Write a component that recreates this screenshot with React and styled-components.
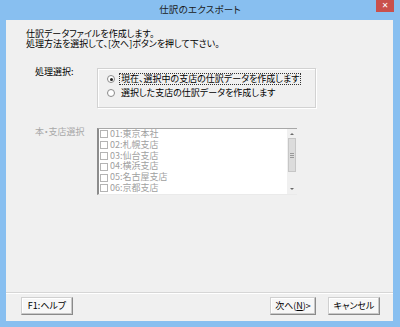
import React from "react";
import styled, { createGlobalStyle } from "styled-components";

const GlobalStyle = createGlobalStyle`
  html, body { margin: 0; padding: 0; background: #88bff0; }
  body { font-family: "Noto Sans CJK JP", "Noto Sans", sans-serif; }
`;

const Window = styled.div`
  width: 400px;
  height: 327px;
  background: #88bff0;
  display: flex;
  flex-direction: column;
  box-sizing: border-box;
  font-feature-settings: "palt";
`;

const TitleBar = styled.div`
  height: 20px;
  display: grid;
  grid-template-columns: 1fr auto 1fr;
  align-items: start;
  flex-shrink: 0;
`;

const Title = styled.div`
  font-size: 9.5px;
  line-height: 18px;
  color: #1a1a1a;
  letter-spacing: 0.2px;
`;

const CloseButton = styled.div`
  justify-self: end;
  margin-right: 6px;
  width: 18px;
  height: 12px;
  background: #c9504c;
  color: #fff;
  font-size: 8px;
  line-height: 12px;
  text-align: center;
  font-family: "DejaVu Sans", sans-serif;
  font-weight: bold;
`;

const Client = styled.div`
  flex: 1;
  margin: 0 7px 6px 6px;
  background: #f0f0f0;
  display: flex;
  flex-direction: column;
  font-size: 9px;
  color: #000;
`;

const Body = styled.div`
  flex: 1;
  padding: 9px 0 0 20px;
  display: flex;
  flex-direction: column;
`;

const Intro = styled.div`
  line-height: 10px;
  height: 20px;
`;

const Row = styled.div`
  display: grid;
  grid-template-columns: 62px auto;
  align-items: start;
  margin-left: 9px;
  margin-top: ${(p) => p.$top}px;
`;

const Label = styled.div`
  line-height: 10px;
  margin-top: -1px;
  color: ${(p) => (p.$disabled ? "#a8a8a8" : "#000")};
`;

const GroupBox = styled.div`
  width: 219px;
  height: 40px;
  box-sizing: border-box;
  border: 1px solid #d2d2d2;
  box-shadow: inset 1px 1px #fff, 1px 1px #fff;
  padding: 4px 0 0 9px;
  display: flex;
  flex-direction: column;
  gap: 2px;
`;

const RadioRow = styled.div`
  display: flex;
  align-items: center;
  height: 12px;
  gap: 4px;
`;

const Radio = styled.span`
  width: 6px;
  height: 6px;
  border-radius: 50%;
  border: 1px solid #8a8a8a;
  background: #fff;
  display: flex;
  align-items: center;
  justify-content: center;
  flex-shrink: 0;
  &::after {
    content: "";
    width: 3px;
    height: 3px;
    border-radius: 50%;
    background: ${(p) => (p.$checked ? "#222" : "transparent")};
  }
`;

const RadioText = styled.span`
  line-height: 10px;
  height: 10px;
  padding: 0 1px;
  border: 1px dotted ${(p) => (p.$focus ? "#333" : "transparent")};
`;

const ListBox = styled.div`
  width: 198px;
  height: 64.8px;
  background: #fff;
  border-top: 1px solid #a8a8a8;
  border-left: 2px solid #8c8c8c;
  border-bottom: 1px solid #eaeaea;
  display: flex;
  overflow: hidden;
`;

const Items = styled.div`
  flex: 1;
  display: flex;
  flex-direction: column;
`;

const Item = styled.div`
  height: 10.8px;
  display: flex;
  align-items: center;
  gap: 2px;
  padding-left: 1px;
  color: #a0a0a0;
  line-height: 10.8px;
`;

const Check = styled.span`
  width: 6px;
  height: 6px;
  border: 1px solid #b4b4b4;
  background: #fff;
  flex-shrink: 0;
`;

const ScrollBar = styled.div`
  width: 10px;
  background: #f0f0f0;
  display: flex;
  flex-direction: column;
`;

const Arrow = styled.div`
  height: 9px;
  display: flex;
  align-items: center;
  justify-content: center;
  &::after {
    content: "";
    border-left: 2px solid transparent;
    border-right: 2px solid transparent;
    ${(p) => (p.$up ? "border-bottom" : "border-top")}: 2px solid #6a6a6a;
  }
`;

const Thumb = styled.div`
  height: 34px;
  margin: 0 1px;
  background: #dcdcdc;
  border: 1px solid #c6c6c6;
  box-sizing: border-box;
  display: flex;
  flex-direction: column;
  align-items: center;
  justify-content: center;
  gap: 1px;
`;

const Grip = styled.span`
  width: 4px;
  height: 1px;
  background: #999;
`;

const Track = styled.div`
  flex: 1;
`;

const Footer = styled.div`
  border-top: 1px solid #d6d6d6;
  box-shadow: inset 0 1px #fff;
  padding: 4px 13px 6px 15px;
  display: flex;
  align-items: center;
  gap: 12px;
`;

const Button = styled.button`
  width: ${(p) => p.$w}px;
  height: 18px;
  margin-left: ${(p) => (p.$push ? "auto" : "0")};
  background: #f7f7f7;
  border: 1px solid #d0d0d0;
  border-right-color: #8a8a8a;
  border-bottom-color: #8a8a8a;
  box-shadow: inset -1px -1px #c8c8c8, inset 1px 1px #fff;
  font-family: "Noto Sans CJK JP", "Noto Sans", sans-serif;
  font-feature-settings: "palt";
  font-size: 9px;
  color: #000;
  padding: 0;
  line-height: 16px;
`;

const branches = [
  "01:東京本社",
  "02:札幌支店",
  "03:仙台支店",
  "04:横浜支店",
  "05:名古屋支店",
  "06:京都支店",
];

export default function App() {
  return (
    <>
      <GlobalStyle />
      <Window>
        <TitleBar>
          <span />
          <Title>仕訳のエクスポート</Title>
          <CloseButton>✕</CloseButton>
        </TitleBar>
        <Client>
          <Body>
            <Intro>
              仕訳データファイルを作成します。
              <br />
              処理方法を選択して、[次へ]ボタンを押して下さい。
            </Intro>
            <Row $top={19}>
              <Label>処理選択:</Label>
              <GroupBox>
                <RadioRow>
                  <Radio $checked />
                  <RadioText $focus>現在、選択中の支店の仕訳データを作成します</RadioText>
                </RadioRow>
                <RadioRow>
                  <Radio />
                  <RadioText>選択した支店の仕訳データを作成します</RadioText>
                </RadioRow>
              </GroupBox>
            </Row>
            <Row $top={20}>
              <Label $disabled>本・支店選択</Label>
              <ListBox>
                <Items>
                  {branches.map((b) => (
                    <Item key={b}>
                      <Check />
                      {b}
                    </Item>
                  ))}
                </Items>
                <ScrollBar>
                  <Arrow $up />
                  <Thumb>
                    <Grip />
                    <Grip />
                    <Grip />
                  </Thumb>
                  <Track />
                  <Arrow />
                </ScrollBar>
              </ListBox>
            </Row>
          </Body>
          <Footer>
            <Button $w={52}>F1:ヘルプ</Button>
            <Button $w={46} $push>次へ(<u>N</u>)&gt;</Button>
            <Button $w={52}>キャンセル</Button>
          </Footer>
        </Client>
      </Window>
    </>
  );
}
